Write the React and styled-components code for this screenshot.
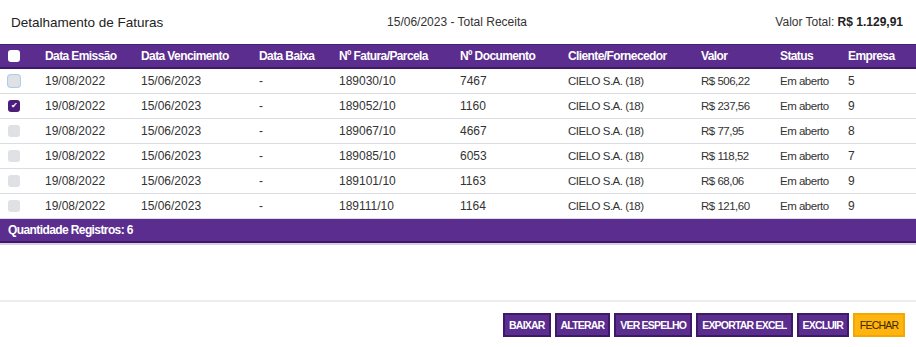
import React from "react";
import styled, { createGlobalStyle } from "styled-components";

const GlobalStyle = createGlobalStyle`
  html, body { margin: 0; padding: 0; background: #fff; }
  body { font-family: "Liberation Sans", Arial, sans-serif; color: #333; }
`;

const rows = [
  { emissao: "19/08/2022", venc: "15/06/2023", baixa: "-", fatura: "189030/10", doc: "7467", cliente: "CIELO S.A. (18)", valor: "R$ 506,22", status: "Em aberto", empresa: "5", focus: true },
  { emissao: "19/08/2022", venc: "15/06/2023", baixa: "-", fatura: "189052/10", doc: "1160", cliente: "CIELO S.A. (18)", valor: "R$ 237,56", status: "Em aberto", empresa: "9", checked: true },
  { emissao: "19/08/2022", venc: "15/06/2023", baixa: "-", fatura: "189067/10", doc: "4667", cliente: "CIELO S.A. (18)", valor: "R$ 77,95", status: "Em aberto", empresa: "8" },
  { emissao: "19/08/2022", venc: "15/06/2023", baixa: "-", fatura: "189085/10", doc: "6053", cliente: "CIELO S.A. (18)", valor: "R$ 118,52", status: "Em aberto", empresa: "7" },
  { emissao: "19/08/2022", venc: "15/06/2023", baixa: "-", fatura: "189101/10", doc: "1163", cliente: "CIELO S.A. (18)", valor: "R$ 68,06", status: "Em aberto", empresa: "9" },
  { emissao: "19/08/2022", venc: "15/06/2023", baixa: "-", fatura: "189111/10", doc: "1164", cliente: "CIELO S.A. (18)", valor: "R$ 121,60", status: "Em aberto", empresa: "9" },
];

const columns = [
  { label: "Data Emissão", key: "emissao", width: 96 },
  { label: "Data Vencimento", key: "venc", width: 118 },
  { label: "Data Baixa", key: "baixa", width: 80 },
  { label: "Nº Fatura/Parcela", key: "fatura", width: 121 },
  { label: "Nº Documento", key: "doc", width: 108 },
  { label: "Cliente/Fornecedor", key: "cliente", width: 133, narrow: true },
  { label: "Valor", key: "valor", width: 79, narrow: true },
  { label: "Status", key: "status", width: 68, narrow: true },
  { label: "Empresa", key: "empresa" },
];

const Page = styled.div`
  height: 347px;
  display: flex;
  flex-direction: column;
`;

const TopBar = styled.div`
  height: 44px;
  display: grid;
  grid-template-columns: 1fr auto 1fr;
  align-items: center;
  padding: 0 13px 0 11px;
  font-size: 12px;
`;

const Title = styled.h1`
  margin: 0;
  font-size: 13.5px;
  font-weight: normal;
  color: #222;
`;

const Center = styled.div`
  color: #333;
`;

const Total = styled.div`
  justify-self: end;
  color: #333;
  b { color: #222; }
`;

const Content = styled.div`
  flex: 1;
`;

const Table = styled.table`
  width: 100%;
  border-collapse: collapse;
  table-layout: fixed;
  font-size: 12px;
`;

const HeadRow = styled.tr`
  background: #5b2d8e;
  border-top: 1px solid #4a2079;
  border-bottom: 2px solid #3e1968;
`;

const Th = styled.th`
  height: 22px;
  padding: 0;
  text-align: left;
  color: #fff;
  font-weight: bold;
  font-size: 12px;
  letter-spacing: -0.6px;
  white-space: nowrap;
`;

const Row = styled.tr`
  border-bottom: 1px solid #dcdde2;
`;

const Td = styled.td`
  height: 24px;
  padding: 0;
  color: #333;
  white-space: nowrap;
  font-size: ${(p) => (p.$narrow ? "11.5px" : "12px")};
  letter-spacing: ${(p) => (p.$narrow ? "-0.5px" : "0")};
`;

const Box = styled.span`
  display: block;
  width: 12px;
  height: 12px;
  margin-left: 8px;
  border-radius: 3px;
  background: ${(p) => (p.$head ? "#fff" : p.$checked ? "#4a1e7a" : "#dfe1e5")};
  box-shadow: ${(p) => (p.$focus ? "0 0 0 1px #a9cdf2" : "none")};
  color: #fff;
  font-size: 8px;
  line-height: 12px;
  text-align: center;
`;

const FooterBar = styled.div`
  background: #5b2d8e;
  border-bottom: 2px solid #3e1968;
  box-shadow: 0 2px 0 #d9cdea;
  height: 22px;
  display: flex;
  align-items: center;
  padding-left: 8px;
  color: #fff;
  font-weight: bold;
  font-size: 12px;
  letter-spacing: -0.6px;
`;

const Actions = styled.div`
  border-top: 2px solid #ececec;
  padding: 11px 11px 10px;
  display: flex;
  justify-content: flex-end;
  gap: 4px;
`;

const Button = styled.button`
  height: 24px;
  padding: 0 4px;
  border: 2px solid ${(p) => (p.$primary ? "#f3a800" : "#3e1968")};
  background: ${(p) => (p.$primary ? "#ffb40f" : "#5b2d8e")};
  color: ${(p) => (p.$primary ? "#3a2a00" : "#fff")};
  font-family: "Liberation Sans", Arial, sans-serif;
  font-weight: ${(p) => (p.$primary ? "normal" : "bold")};
  font-size: 10.5px;
  letter-spacing: -0.8px;
  min-width: ${(p) => (p.$primary ? "52px" : "0")};
  cursor: pointer;
`;

export default function App() {
  return (
    <>
      <GlobalStyle />
      <Page>
        <TopBar>
          <Title>Detalhamento de Faturas</Title>
          <Center>15/06/2023 - Total Receita</Center>
          <Total>
            Valor Total: <b>R$ 1.129,91</b>
          </Total>
        </TopBar>
        <Content>
          <Table>
            <colgroup>
              <col style={{ width: 45 }} />
              {columns.map((c) => (
                <col key={c.key} style={c.width ? { width: c.width } : undefined} />
              ))}
            </colgroup>
            <thead>
              <HeadRow>
                <Th>
                  <Box $head />
                </Th>
                {columns.map((c) => (
                  <Th key={c.key}>{c.label}</Th>
                ))}
              </HeadRow>
            </thead>
            <tbody>
              {rows.map((r, i) => (
                <Row key={i}>
                  <Td>
                    <Box $checked={r.checked} $focus={r.focus}>
                      {r.checked ? "✔" : ""}
                    </Box>
                  </Td>
                  {columns.map((c) => (
                    <Td key={c.key} $narrow={c.narrow}>
                      {r[c.key]}
                    </Td>
                  ))}
                </Row>
              ))}
            </tbody>
          </Table>
          <FooterBar>Quantidade Registros: 6</FooterBar>
        </Content>
        <Actions>
          <Button>BAIXAR</Button>
          <Button>ALTERAR</Button>
          <Button>VER ESPELHO</Button>
          <Button>EXPORTAR EXCEL</Button>
          <Button>EXCLUIR</Button>
          <Button $primary>FECHAR</Button>
        </Actions>
      </Page>
    </>
  );
}
